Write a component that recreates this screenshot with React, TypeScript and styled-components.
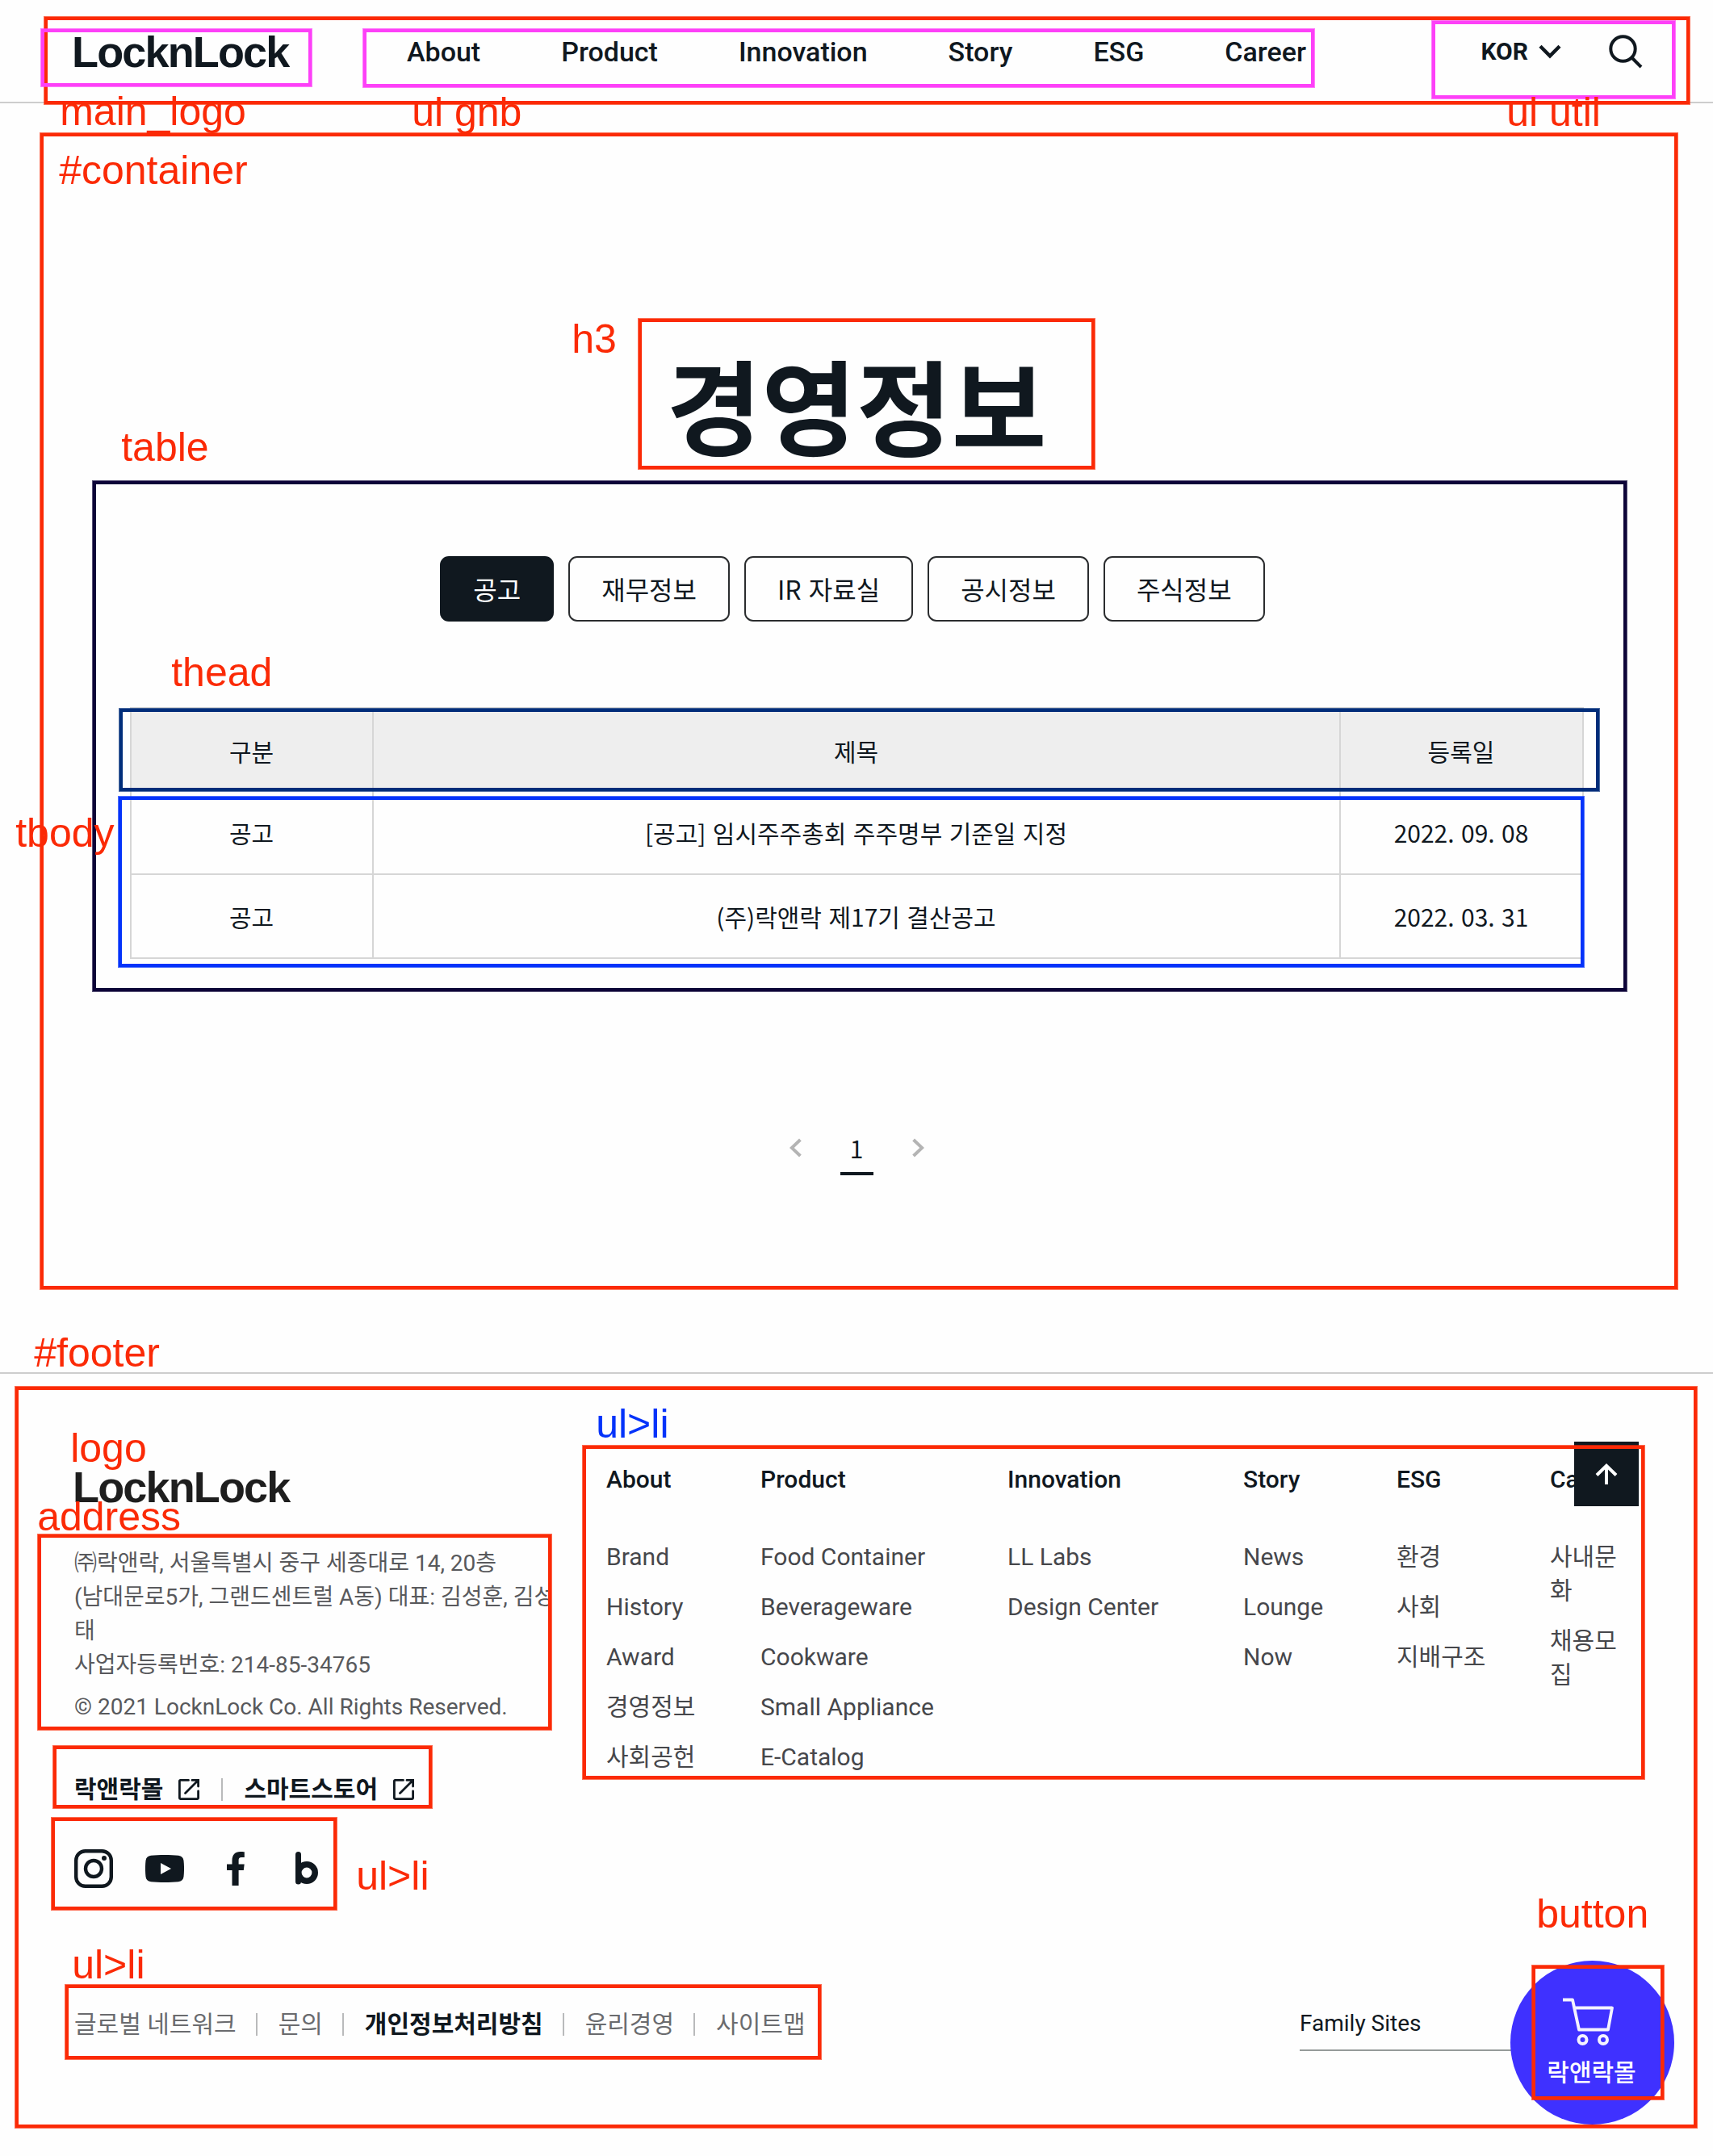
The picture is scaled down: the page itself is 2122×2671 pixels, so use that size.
import React from "react";
import styled, { createGlobalStyle } from "styled-components";

const INK = "#10181f";
const ROBOTO = `Roboto, "Noto Sans CJK KR", sans-serif`;
const NOTO = `"Noto Sans CJK KR", "Noto Sans", sans-serif`;
const ARIAL = `"Liberation Sans", Arial, sans-serif`;
const RED = "#fb2a06";
const PINK = "#fd40f8";

const GlobalStyle = createGlobalStyle`
  * { box-sizing: border-box; }
  body { margin: 0; background: #fefefe; color: ${INK}; font-family: ${ROBOTO}; }
  ul { list-style: none; margin: 0; padding: 0; }
  h1, h2, h3, p, address { margin: 0; font-style: normal; }
  svg { display: block; flex: none; }
`;

const Page = styled.div`
  position: relative;
  width: 2122px;
  height: 2671px;
  overflow: hidden;
`;

/* Header */
const Header = styled.header`
  display: flex;
  align-items: center;
  height: 128px;
  padding: 2px 87px 0 89px;
  border-bottom: 2px solid #cdcdcd;
`;

const Logo = styled.h1<{ $tone?: string }>`
  width: 275px;
  font: bold 54px/60px ${ARIAL};
  letter-spacing: -1.85px;
  color: ${(p) => p.$tone || INK};
  white-space: nowrap;
`;

const Gnb = styled.ul`
  display: flex;
  gap: 100px;
  margin-left: 140px;
  font-size: 34px;
  font-weight: 500;
  line-height: 40px;
`;

const Util = styled.ul`
  display: flex;
  align-items: center;
  margin-left: auto;
  gap: 59px;
`;

const Lang = styled.li`
  display: flex;
  align-items: center;
  gap: 13px;
  font-size: 30px;
  font-weight: 700;
  line-height: 40px;
`;

/* Main */
const Main = styled.main`
  display: flex;
  flex-direction: column;
  align-items: center;
  height: 1572px;
  padding: 308px 160px 0;
`;

const Title = styled.h3`
  font: bold 128px/128px ${NOTO};
`;

const Tabs = styled.ul`
  display: flex;
  gap: 18px;
  margin-top: 125px;
  padding-right: 10px;
`;

const Tab = styled.li<{ $on?: boolean }>`
  height: 81px;
  padding: 0 39px;
  border: 2px solid ${(p) => (p.$on ? INK : "#2a2c2e")};
  border-radius: 11px;
  background: ${(p) => (p.$on ? INK : "#fefefe")};
  color: ${(p) => (p.$on ? "#fff" : INK)};
  font: 400 32px/76px ${NOTO};
  word-spacing: 2px;
  white-space: nowrap;
`;

const Table = styled.table`
  width: 1799px;
  margin-top: 106px;
  border-collapse: collapse;
  table-layout: fixed;
  font: 400 30px/40px ${NOTO};
  word-spacing: 1.7px;
  text-align: center;
`;

const Col = styled.col<{ $w: number }>`
  width: ${(p) => p.$w}px;
`;

const HeadCell = styled.th`
  height: 102px;
  padding: 3px 0 0;
  border: 2px solid #d6d6d6;
  background: #eee;
  font-weight: 400;
`;

const Cell = styled.td`
  height: 104px;
  padding: 0 0 1px;
  border: 2px solid #d6d6d6;
`;

const Pagination = styled.div`
  display: flex;
  align-items: flex-start;
  margin-top: 212px;
  gap: 48px;
`;

const Arrow = styled.span`
  padding-top: 10px;
`;

const Current = styled.strong`
  width: 41px;
  height: 56px;
  border-bottom: 4px solid ${INK};
  font: 400 30px/44px ${NOTO};
  text-align: center;
`;

/* Footer */
const Footer = styled.footer`
  height: 971px;
  padding: 110px 92px 0 90px;
  border-top: 2px solid #cdcdcd;
`;

const FooterTop = styled.div`
  display: grid;
  grid-template-columns: 661px 1fr;
`;

const Address = styled.address`
  width: 593px;
  margin-top: 44px;
  padding-left: 2px;
  overflow: hidden;
  color: #58595c;
  font-size: 28px;
  line-height: 42px;
  white-space: nowrap;
`;

const Copyright = styled.p`
  margin-top: 10px;
`;

const Stores = styled.ul`
  display: flex;
  align-items: center;
  margin-top: 60px;
  padding-left: 2px;
  height: 42px;
`;

const Store = styled.li`
  display: flex;
  align-items: center;
  gap: 18px;
  font-size: 30px;
  font-weight: 700;
  line-height: 42px;
`;

const Divider = styled.li<{ $l: number; $r: number }>`
  width: 2px;
  height: 28px;
  margin: 0 ${(p) => p.$r}px 0 ${(p) => p.$l}px;
  background: #b9babb;
`;

const Sns = styled.ul`
  display: flex;
  gap: 40px;
  margin: 53px 0 0 2px;
`;

const Sitemap = styled.nav`
  display: grid;
  grid-template-columns: 191px 306px 292px 190px 190px 90px;
`;

const SiteHead = styled.h2`
  margin-bottom: 54px;
  font-size: 30px;
  font-weight: 500;
  line-height: 42px;
`;

const SiteList = styled.ul`
  display: flex;
  flex-direction: column;
  gap: 20px;
  color: #46474b;
  font-size: 30px;
  line-height: 42px;
`;

const FooterBottom = styled.div`
  display: flex;
  justify-content: space-between;
  margin-top: 148px;
`;

const Policy = styled.ul`
  display: flex;
  align-items: center;
  height: 42px;
  padding-left: 2px;
  color: #6a6b6e;
  font-size: 30px;
  line-height: 42px;
`;

const PolicyItem = styled.li<{ $strong?: boolean }>`
  ${(p) => (p.$strong ? `color: ${INK}; font-weight: 700;` : "")}
  white-space: nowrap;
`;

const Family = styled.div`
  width: 420px;
  height: 56px;
  margin-top: -2px;
  border-bottom: 2px solid #959b9a;
  font-size: 28px;
  line-height: 44px;
`;

/* Floating controls */
const TopButton = styled.button`
  position: absolute;
  left: 1950px;
  top: 1786px;
  display: flex;
  justify-content: center;
  width: 80px;
  height: 80px;
  padding: 27px 0 0;
  border: 0;
  background: ${INK};
`;

const MallButton = styled.button`
  position: absolute;
  left: 1871px;
  top: 2429px;
  display: flex;
  flex-direction: column;
  align-items: center;
  gap: 9px;
  width: 203px;
  height: 203px;
  padding: 45px 2px 0 0;
  border: 0;
  border-radius: 50%;
  background: #3f31ff;
  color: #fff;
  font: 500 30px/44px ${NOTO};
`;

const CartIcon = styled.svg`
  margin-right: 9px;
`;

/* Markup notes laid over the page */
const Frame = styled.div<{ $x: number; $y: number; $r: number; $b: number; $c?: string }>`
  position: absolute;
  left: ${(p) => p.$x + 1}px;
  top: ${(p) => p.$y + 1}px;
  width: ${(p) => p.$r - p.$x - 2}px;
  height: ${(p) => p.$b - p.$y - 1}px;
  border: 4px solid ${(p) => p.$c || RED};
  box-shadow: 0 0 0 1px ${(p) => p.$c || RED}b0;
  pointer-events: none;
`;

const Note = styled.span<{ $x: number; $base: number; $c?: string }>`
  position: absolute;
  left: ${(p) => p.$x + 0.2}px;
  top: ${(p) => p.$base - 47}px;
  color: ${(p) => p.$c || RED};
  font: 400 50px/60px ${ARIAL};
  white-space: nowrap;
`;

const ExternalIcon = () => (
  <svg width="28" height="28" viewBox="0 0 28 28" fill="none" stroke={INK} strokeWidth="2.8">
    <path d="M13.5 2.4H3.4a1 1 0 0 0-1 1v21.2a1 1 0 0 0 1 1h21.2a1 1 0 0 0 1-1V16" strokeLinecap="round" />
    <path d="M9.5 18.5 25 3M18 2.4h7.6V10" strokeLinecap="round" />
  </svg>
);

const PageArrow = ({ next }: { next?: boolean }) => (
  <svg width="15" height="24" viewBox="0 0 15 24" fill="none" stroke="#b4b4b4" strokeWidth="4">
    <path d={next ? "M1.6 2 12.2 12 1.6 22" : "M13.4 2 2.8 12 13.4 22"} />
  </svg>
);

const gnb = ["About", "Product", "Innovation", "Story", "ESG", "Career"];
const tabs = ["공고", "재무정보", "IR 자료실", "공시정보", "주식정보"];
const rows = [
  ["공고", "[공고] 임시주주총회 주주명부 기준일 지정", "2022. 09. 08"],
  ["공고", "(주)락앤락 제17기 결산공고", "2022. 03. 31"],
];
const sitemap: [string, string[]][] = [
  ["About", ["Brand", "History", "Award", "경영정보", "사회공헌"]],
  ["Product", ["Food Container", "Beverageware", "Cookware", "Small Appliance", "E-Catalog"]],
  ["Innovation", ["LL Labs", "Design Center"]],
  ["Story", ["News", "Lounge", "Now"]],
  ["ESG", ["환경", "사회", "지배구조"]],
  ["Career", ["사내문화", "채용모집"]],
];
const policy = ["글로벌 네트워크", "문의", "개인정보처리방침", "윤리경영", "사이트맵"];

const frames = [
  { x: 54, y: 20, r: 2094, b: 129 },
  { x: 50, y: 35, r: 387, b: 107, c: PINK },
  { x: 449, y: 35, r: 1629, b: 108, c: PINK },
  { x: 1773, y: 25, r: 2076, b: 122, c: PINK },
  { x: 49, y: 164, r: 2079, b: 1597 },
  { x: 790, y: 394, r: 1357, b: 581 },
  { x: 114, y: 595, r: 2016, b: 1228, c: "#0d0438" },
  { x: 147, y: 877, r: 1982, b: 980, c: "#002d7a" },
  { x: 146, y: 986, r: 1963, b: 1198, c: "#0433fa" },
  { x: 18, y: 1717, r: 2103, b: 2636 },
  { x: 721, y: 1790, r: 2038, b: 2204 },
  { x: 46, y: 1900, r: 684, b: 2143 },
  { x: 65, y: 2162, r: 536, b: 2240 },
  { x: 63, y: 2251, r: 418, b: 2366 },
  { x: 80, y: 2458, r: 1018, b: 2551 },
  { x: 1897, y: 2434, r: 2062, b: 2601 },
];

const notes = [
  { t: "main_logo", x: 74, y: 155 },
  { t: "ul gnb", x: 510, y: 156 },
  { t: "ul util", x: 1866, y: 156 },
  { t: "#container", x: 73, y: 228 },
  { t: "h3", x: 708, y: 437 },
  { t: "table", x: 150, y: 571 },
  { t: "thead", x: 212, y: 850 },
  { t: "tbody", x: 19, y: 1049 },
  { t: "#footer", x: 42, y: 1693 },
  { t: "logo", x: 87, y: 1811 },
  { t: "ul>li", x: 738, y: 1781, c: "#0433fa" },
  { t: "address", x: 46, y: 1896 },
  { t: "ul>li", x: 441, y: 2341 },
  { t: "ul>li", x: 89, y: 2451 },
  { t: "button", x: 1903, y: 2388 },
];

export default function App() {
  return (
    <Page>
      <GlobalStyle />
      <Header>
        <Logo>LocknLock</Logo>
        <Gnb>
          {gnb.map((g) => (
            <li key={g}>{g}</li>
          ))}
        </Gnb>
        <Util>
          <Lang>
            KOR
            <svg width="28" height="18" viewBox="0 0 28 18" fill="none" stroke={INK} strokeWidth="4.4">
              <path d="m2 2.2 12 12.2L26 2.2" />
            </svg>
          </Lang>
          <li>
            <svg width="42" height="42" viewBox="0 0 42 42" fill="none" stroke={INK} strokeWidth="4">
              <circle cx="17.5" cy="17.5" r="15.2" />
              <path d="M28.5 28.5 40 40" />
            </svg>
          </li>
        </Util>
      </Header>

      <Main>
        <Title>경영정보</Title>
        <Tabs>
          {tabs.map((t, i) => (
            <Tab key={t} $on={i === 0}>
              {t}
            </Tab>
          ))}
        </Tabs>
        <Table>
          <colgroup>
            <Col $w={300} />
            <Col $w={1198} />
            <Col $w={301} />
          </colgroup>
          <thead>
            <tr>
              <HeadCell>구분</HeadCell>
              <HeadCell>제목</HeadCell>
              <HeadCell>등록일</HeadCell>
            </tr>
          </thead>
          <tbody>
            {rows.map((r) => (
              <tr key={r[1]}>
                {r.map((c) => (
                  <Cell key={c}>{c}</Cell>
                ))}
              </tr>
            ))}
          </tbody>
        </Table>
        <Pagination>
          <Arrow>
            <PageArrow />
          </Arrow>
          <Current>1</Current>
          <Arrow>
            <PageArrow next />
          </Arrow>
        </Pagination>
      </Main>

      <Footer>
        <FooterTop>
          <div>
            <Logo as="h2" $tone="#1e1e1e">
              LocknLock
            </Logo>
            <Address>
              ㈜락앤락, 서울특별시 중구 세종대로 14, 20층
              <br />
              (남대문로5가, 그랜드센트럴 A동) 대표: 김성훈, 김성
              <br />
              태<br />
              사업자등록번호: 214-85-34765
              <Copyright>© 2021 LocknLock Co. All Rights Reserved.</Copyright>
            </Address>
            <Stores>
              <Store>
                락앤락몰
                <ExternalIcon />
              </Store>
              <Divider $l={26} $r={26} />
              <Store>
                스마트스토어
                <ExternalIcon />
              </Store>
            </Stores>
            <Sns>
              <li>
                <svg width="48" height="48" viewBox="0 0 48 48" fill="none" stroke={INK} strokeWidth="4.4">
                  <rect x="2.2" y="2.2" width="43.6" height="43.6" rx="11.5" />
                  <circle cx="24" cy="24" r="10" />
                  <circle cx="37" cy="11" r="3" fill={INK} stroke="none" />
                </svg>
              </li>
              <li>
                <svg width="48" height="48" viewBox="0 0 48 48">
                  <path
                    fill={INK}
                    fillRule="evenodd"
                    d="M7 7.700C16 6.700 32 6.700 41 7.700c4 .5 6 2.700 6.500 6.300.7 6 .7 14 0 20-.5 3.600-2.500 5.800-6.500 6.300-9 1-25 1-34 0-4-.5-6-2.700-6.500-6.300-.7-6-.7-14 0-20C1 10.400 3 8.200 7 7.700zM19 17v14l13-7z"
                  />
                </svg>
              </li>
              <li>
                <svg width="48" height="48" viewBox="0 0 48 48" fill={INK}>
                  <path d="M19.500 45V26H13v-7.500h6.500v-4.200C19.500 6.500 23.500 3 29.500 3c2 0 4 .1 5.300.3v6.600h-3.600c-2.900 0-3.600 1.500-3.600 3.600v5h7.100L33.800 26h-6.200v19z" />
                </svg>
              </li>
              <li>
                <svg width="48" height="48" viewBox="0 0 48 48" fill="none" stroke={INK}>
                  <path d="M13.500 6.500v33.500" strokeWidth="7" strokeLinecap="round" />
                  <circle cx="24" cy="29" r="10.200" strokeWidth="7.600" />
                </svg>
              </li>
            </Sns>
          </div>
          <Sitemap>
            {sitemap.map(([head, items]) => (
              <div key={head}>
                <SiteHead>{head}</SiteHead>
                <SiteList>
                  {items.map((it) => (
                    <li key={it}>{it}</li>
                  ))}
                </SiteList>
              </div>
            ))}
          </Sitemap>
        </FooterTop>
        <FooterBottom>
          <Policy>
            {policy.map((p, i) => (
              <React.Fragment key={p}>
                {i > 0 && <Divider $l={24} $r={26} />}
                <PolicyItem $strong={i === 2}>{p}</PolicyItem>
              </React.Fragment>
            ))}
          </Policy>
          <Family>Family Sites</Family>
        </FooterBottom>
      </Footer>

      <TopButton aria-label="Top">
        <svg width="28" height="26" viewBox="0 0 28 26" fill="none" stroke="#fff" strokeWidth="4">
          <path d="M14 26V3M2 14.500 14 2.800l12 11.700" />
        </svg>
      </TopButton>
      <MallButton>
        <CartIcon width="64" height="60" viewBox="0 0 64 60" fill="none" stroke="#f4f2ff" strokeWidth="3.800">
          <path d="M1 3.500h12l8 37h36l5-27H16" strokeLinejoin="round" />
          <circle cx="25.500" cy="53" r="5" strokeWidth="4" />
          <circle cx="51" cy="53" r="5" strokeWidth="4" />
        </CartIcon>
        락앤락몰
      </MallButton>

      {frames.map((f, i) => (
        <Frame key={i} $x={f.x} $y={f.y} $r={f.r} $b={f.b} $c={f.c} />
      ))}
      {notes.map((n, i) => (
        <Note key={i} $x={n.x} $base={n.y} $c={n.c}>
          {n.t}
        </Note>
      ))}
    </Page>
  );
}
